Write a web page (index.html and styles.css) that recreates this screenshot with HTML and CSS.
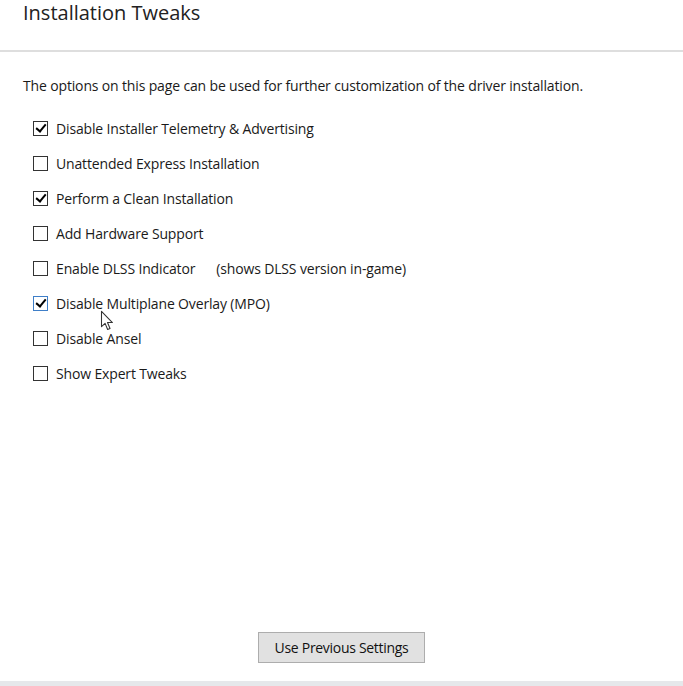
FILE: index.html
```html
<!DOCTYPE html>
<html>
<head>
<meta charset="utf-8">
<link rel="stylesheet" href="styles.css">
</head>
<body>
<div class="page">
  <header class="header">
    <h1 class="title">Installation Tweaks</h1>
  </header>
  <main class="content">
    <p class="desc">The options on this page can be used for further customization of the driver installation.</p>
    <ul class="options">
      <li class="option"><span class="box checked"></span><span class="label">Disable Installer Telemetry &amp; Advertising</span></li>
      <li class="option"><span class="box"></span><span class="label">Unattended Express Installation</span></li>
      <li class="option"><span class="box checked"></span><span class="label">Perform a Clean Installation</span></li>
      <li class="option"><span class="box"></span><span class="label">Add Hardware Support</span></li>
      <li class="option"><span class="box"></span><span class="label">Enable DLSS Indicator</span><span class="note">(shows DLSS version in-game)</span></li>
      <li class="option"><span class="box checked hover"></span><span class="label">Disable Multiplane Overlay (MPO)</span></li>
      <li class="option"><span class="box"></span><span class="label">Disable Ansel</span></li>
      <li class="option"><span class="box"></span><span class="label">Show Expert Tweaks</span></li>
    </ul>
  </main>
  <footer class="footer">
    <button class="btn">Use Previous Settings</button>
  </footer>
  <div class="bottom-band"></div>
  <svg class="cursor" width="17" height="22" viewBox="0 0 12.5 16.5"><path d="M1 1 L1 12.5 L3.7 10 L5.6 14.6 L7.4 13.9 L5.5 9.4 L9.2 9.4 Z" fill="#fff" stroke="#333" stroke-width="0.8" stroke-linejoin="round"/></svg>
</div>
</body>
</html>
```

FILE: styles.css
```css
* { box-sizing: border-box; }
html, body { margin: 0; padding: 0; background: #fff; }
body { font-family: "Open Sans", "Noto Sans", sans-serif; color: #1a1a1a; }
.page { position: relative; width: 683px; height: 686px; display: flex; flex-direction: column; overflow: hidden; }
.header { height: 52px; border-bottom: 2px solid #dedede; padding-left: 23px; }
.title { margin: 0; font-weight: 400; font-size: 20px; line-height: 26px; color: #222; }
.content { flex: 1; padding-left: 23px; }
.desc { margin: 26px 0 0; font-size: 14px; line-height: 16px; letter-spacing: -0.15px; }
.options { list-style: none; margin: 24px 0 0; padding: 0 0 0 10px; display: flex; flex-direction: column; gap: 15px; }
.option { display: flex; align-items: center; height: 20px; font-size: 14px; letter-spacing: -0.15px; }
.box { width: 15px; height: 15px; border: 1px solid #333; background: #fff; position: relative; flex: none; }
.box.hover { border-color: #3f7fc8; }
.box.checked::after { content: ""; position: absolute; left: 4px; top: 0px; width: 4px; height: 8px; border: solid #000; border-width: 0 2px 2px 0; transform: rotate(40deg); }
.label { margin-left: 8px; }
.note { margin-left: 21px; }
.footer { height: 57px; padding-top: 8px; display: flex; justify-content: center; align-items: flex-start; }
.btn { width: 167px; height: 31px; background: #e1e1e1; border: 1px solid #adadad; font-family: inherit; font-size: 14px; color: #111; padding: 0; letter-spacing: -0.3px; }
.bottom-band { height: 5px; background: #e6e8eb; }
.cursor { position: absolute; left: 100px; top: 310px; }
```
